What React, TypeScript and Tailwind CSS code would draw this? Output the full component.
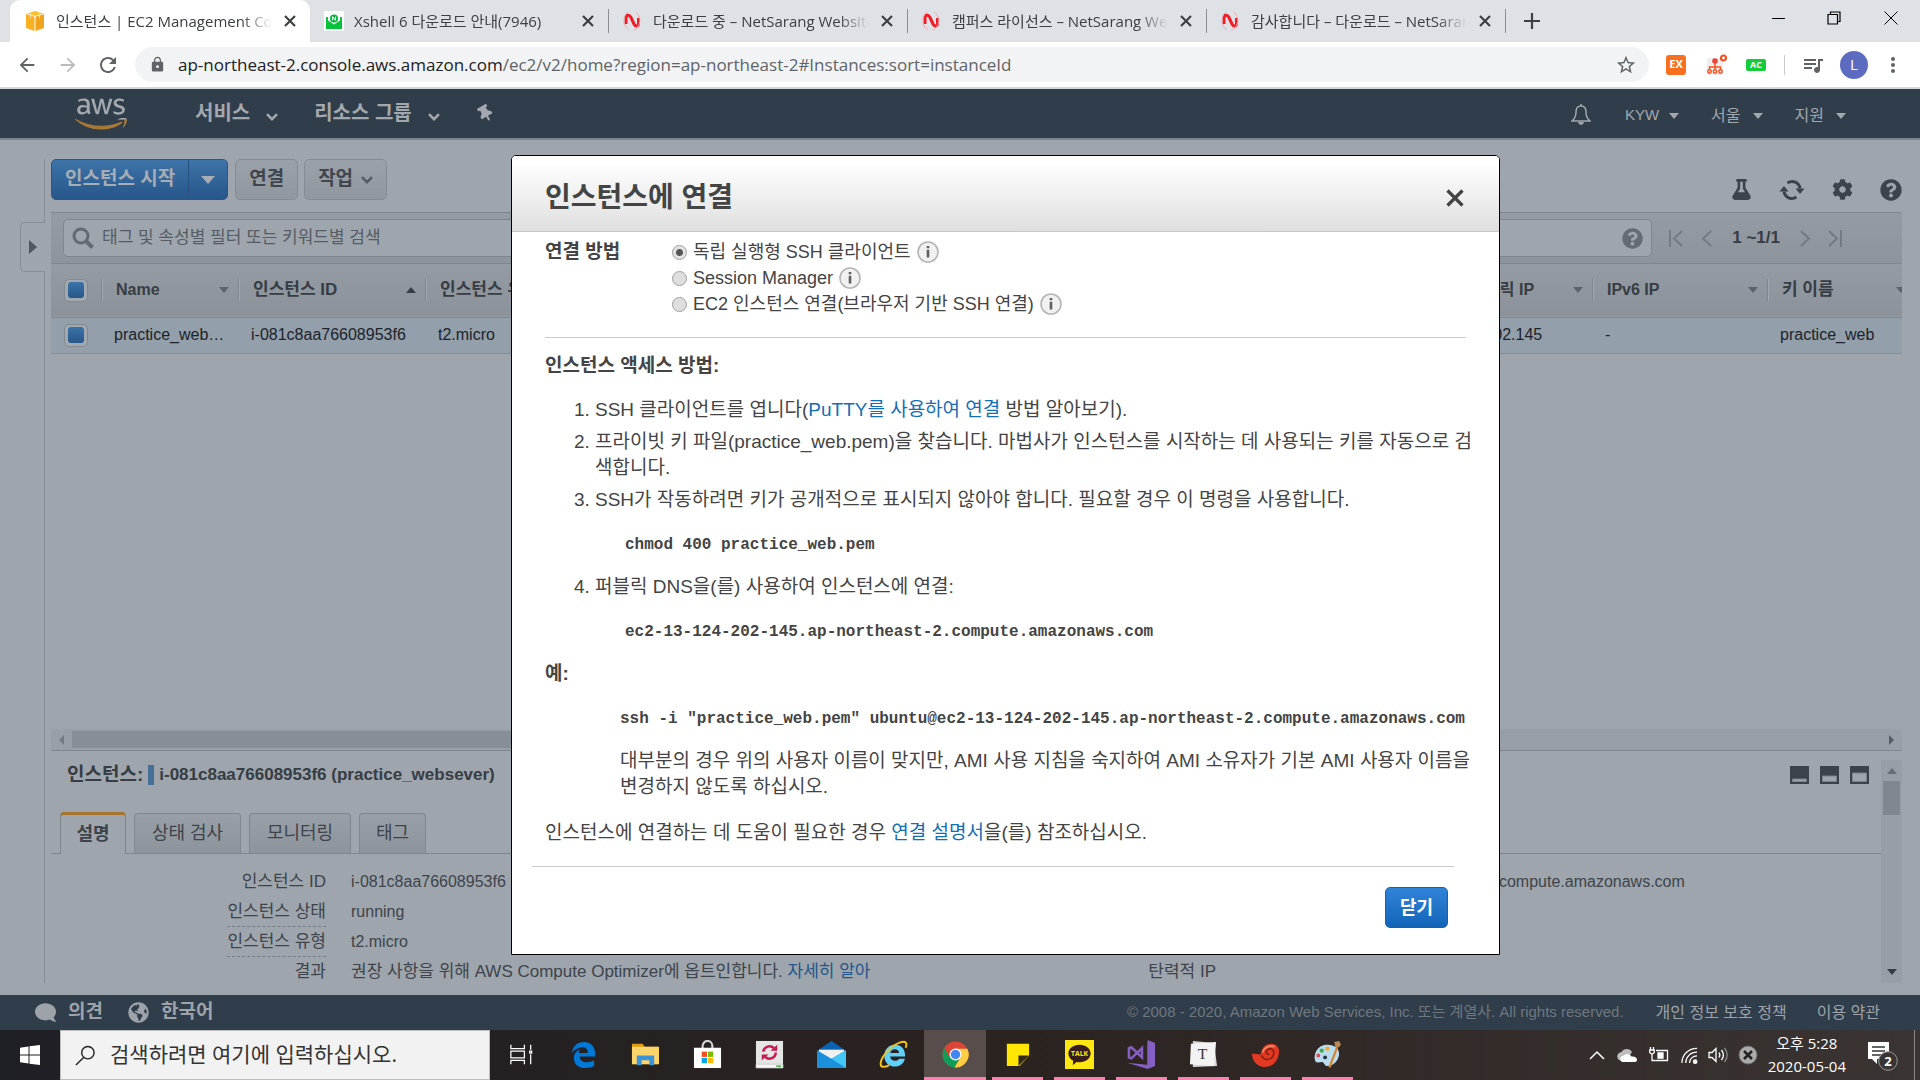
import React from "react";
import {
  FaAws,
  FaCog,
  FaComment,
  FaFlask,
  FaGlobeAmericas,
  FaQuestionCircle,
  FaThumbtack,
} from "react-icons/fa";
import {
  MdArrowBack,
  MdArrowForward,
  MdLock,
  MdMoreVert,
  MdQueueMusic,
  MdRefresh,
  MdStarBorder,
} from "react-icons/md";

/* ---------- small shapes ---------- */

function CaretDown({ className = "" }: { className?: string }) {
  return (
    <svg viewBox="0 0 10 6" className={`h-1.5 w-2.5 shrink-0 ${className}`} fill="currentColor">
      <path d="M0 0h10L5 6z" />
    </svg>
  );
}

function Chevron({ className = "" }: { className?: string }) {
  return (
    <svg viewBox="0 0 12 8" className={`h-2 w-3 shrink-0 ${className}`} fill="none" stroke="currentColor" strokeWidth="2.6">
      <path d="M1 1.2l5 5 5-5" />
    </svg>
  );
}

/* ---------- browser chrome ---------- */

function CubeIcon() {
  return (
    <svg viewBox="0 0 18 20" className="h-5 w-[18px]">
      <path d="M9 0l8 2.5L9 5 1 2.500z" fill="#fbc02d" />
      <path d="M0 3l8.500 2.800V20L0 17z" fill="#f9b021" />
      <path d="M18 3L9.500 5.800V20L18 17z" fill="#f0a31c" />
      <path d="M4.500 1.500v6M13.500 1.500v6" stroke="#ffe0a3" strokeWidth="1" fill="none" />
    </svg>
  );
}

function MailIcon() {
  return (
    <svg viewBox="0 0 20 20" className="size-5">
      <rect width="20" height="20" fill="#fff" />
      <path d="M2 6h16v12H2z" fill="#07c33c" />
      <path d="M4 5.500L10 2l6 3.500V11l-6 4.500L4 11z" fill="#fff" />
      <circle cx="10" cy="7.500" r="4" fill="#07b53c" />
      <path d="M8.600 9.300V5.700l2.800 3.600V5.700" stroke="#fff" strokeWidth="1" fill="none" />
      <path d="M2 8l8 5.500L18 8v10H2z" fill="#07c33c" />
    </svg>
  );
}

function NetSarangIcon() {
  return (
    <svg viewBox="0 0 18 20" className="h-5 w-[18px]" fill="none">
      <path d="M3 13V7c0-3.500 3.500-3.500 5-.5l3 6.500c1.500 3 4.500 2.500 4.500-.5V7" stroke="#ee1c25" strokeWidth="3" />
      <path d="M5 1C1 4 0 10 2 14.500c.8 1.700 2 3.300 3.500 4.300M12.500.8C16 4 17.500 7.500 16.500 12c-.8 3-3 6-6 7.300" stroke="#f4a3a8" strokeWidth="1" />
    </svg>
  );
}

const tabs = [
  { title: "인스턴스 | EC2 Management Console", icon: <CubeIcon />, active: true },
  { title: "Xshell 6 다운로드 안내(7946)", icon: <MailIcon />, active: false },
  { title: "다운로드 중 – NetSarang Website", icon: <NetSarangIcon />, active: false },
  { title: "캠퍼스 라이선스 – NetSarang Website", icon: <NetSarangIcon />, active: false },
  { title: "감사합니다 – 다운로드 – NetSarang", icon: <NetSarangIcon />, active: false },
];

function TabStrip() {
  return (
    <div className="flex h-[42px] shrink-0 items-stretch bg-[#dee1e6] pl-2.5 text-[#3c4043]">
      {tabs.map((t) => (
        <div
          key={t.title}
          className={
            t.active
              ? "flex w-[300px] items-center rounded-t-[10px] bg-white pr-2.5 pl-4"
              : "flex w-[299px] items-center pr-0 pl-3.5"
          }
        >
          <span className="flex w-[30px] shrink-0">{t.icon}</span>
          <span className="min-w-0 flex-1 overflow-hidden text-[15px] leading-[40px] whitespace-nowrap [mask-image:linear-gradient(to_right,#000_86%,transparent)]">
            {t.title}
          </span>
          <button aria-label="탭 닫기" className="ml-2 flex size-5 items-center justify-center">
            <svg viewBox="0 0 12 12" className="size-3" stroke="currentColor" strokeWidth="2.200"><path d="M1 1l10 10M11 1L1 11" /></svg>
          </button>
          {!t.active && <span className="ml-2.5 h-6 w-px bg-[#8a8d91]" />}
        </div>
      ))}
      <button aria-label="새 탭" className="ml-3 flex w-7 items-center justify-center">
        <svg viewBox="0 0 16 16" className="size-4" stroke="currentColor" strokeWidth="2.200"><path d="M8 0v16M0 8h16" /></svg>
      </button>
      <div className="ml-auto flex h-9 items-center text-black">
        <button aria-label="최소화" className="flex w-14 justify-center">
          <svg viewBox="0 0 13 13" className="size-[13px]" stroke="currentColor"><path d="M0 6.500h13" /></svg>
        </button>
        <button aria-label="이전 크기로" className="flex w-14 justify-center">
          <svg viewBox="0 0 14 14" className="size-3.5" fill="none" stroke="currentColor" strokeWidth="1.200">
            <path d="M1 3.500h9.500V13H1zM3.500 3.500V1H13v9.500h-2.500" />
          </svg>
        </button>
        <button aria-label="닫기" className="flex w-[58px] justify-center">
          <svg viewBox="0 0 14 14" className="size-3.5" stroke="currentColor"><path d="M.5.5l13 13M13.500.5l-13 13" /></svg>
        </button>
      </div>
    </div>
  );
}

function AddressBar() {
  return (
    <div className="flex h-[47px] shrink-0 items-center border-b-2 border-[#d5d8dc] bg-white pr-[15px] pl-4 text-[#5f6368]">
      <button aria-label="뒤로"><MdArrowBack className="size-[22px]" /></button>
      <button aria-label="앞으로" className="ml-[19px] text-[#babcbe]"><MdArrowForward className="size-[22px]" /></button>
      <button aria-label="새로고침" className="ml-[17px]"><MdRefresh className="size-6" /></button>
      <div className="ml-[15px] flex h-[35px] min-w-0 flex-1 items-center rounded-full bg-[#f1f3f4] pr-3 pl-3.5">
        <MdLock className="size-[17px] shrink-0" />
        <span className="ml-3 min-w-0 flex-1 truncate text-[17px]">
          <span className="text-[#202124]">ap-northeast-2.console.aws.amazon.com</span>
          /ec2/v2/home?region=ap-northeast-2#Instances:sort=instanceId
        </span>
        <button aria-label="북마크"><MdStarBorder className="size-[22px]" /></button>
      </div>
      <span className="ml-[17px] flex size-5 items-center justify-center rounded-[3px] bg-[#f8701f] text-[11px] font-bold text-white">EX</span>
      <svg viewBox="0 0 22 22" className="ml-5 size-[22px]" fill="none" stroke="#f4511e" strokeWidth="1.500">
        <rect x="1" y="4" width="16" height="17" rx="2" fill="#eee" stroke="none" />
        <circle cx="9" cy="7" r="2.800" fill="#ef4136" stroke="none" />
        <path d="M9 9v6M3.500 16v-3h11v3" />
        <circle cx="3.500" cy="17.500" r="1.700" />
        <circle cx="9" cy="17.500" r="1.700" />
        <circle cx="14.500" cy="17.500" r="1.700" />
        <circle cx="17.500" cy="4" r="2.500" strokeWidth="2.200" fill="#fff" />
      </svg>
      <span className="ml-[18px] flex h-3 w-5 items-center justify-center rounded-[2px] bg-[#14cc3a] text-[9px] font-bold text-white">AC</span>
      <span className="ml-[18px] h-5 w-px bg-[#c8cacd]" />
      <MdQueueMusic className="ml-4 size-6" />
      <span className="ml-[15px] flex size-7 items-center justify-center rounded-full bg-[#5c6bc0] text-[15px] text-white">L</span>
      <button aria-label="메뉴" className="ml-[13px]"><MdMoreVert className="size-6" /></button>
    </div>
  );
}

/* ---------- AWS console ---------- */

function ConsoleNav() {
  return (
    <nav className="flex h-[51px] shrink-0 items-center border-b-2 border-[#7b848d] bg-[#303d4a] pr-[74px] pl-[75px] text-[#a3a8ae]">
      <svg width="0" height="0" className="absolute">
        <linearGradient id="aws-fill" gradientUnits="userSpaceOnUse" x1="0" y1="0" x2="0" y2="512">
          <stop offset=".62" stopColor="#a3a8ae" />
          <stop offset=".62" stopColor="#a87936" />
        </linearGradient>
      </svg>
      <FaAws className="h-[50px] w-[52px]" fill="url(#aws-fill)" />
      <button className="ml-[68px] flex items-center pb-0.5 text-xl font-bold">
        서비스 <Chevron className="mt-2 ml-4" />
      </button>
      <button className="ml-[36px] flex items-center pb-0.5 text-xl font-bold">
        리소스 그룹 <Chevron className="mt-2 ml-4" />
      </button>
      <button aria-label="고정" className="ml-[37px]"><FaThumbtack className="size-[17px] -rotate-30" /></button>
      <svg viewBox="0 0 20 22" className="ml-auto h-[22px] w-5" fill="none" stroke="currentColor" strokeWidth="1.500">
        <path d="M10 1v2M10 3c-3.500 0-5 2.500-5 6 0 5-1.500 7-4 9h18c-2.500-2-4-4-4-9 0-3.500-1.500-6-5-6z" />
        <path d="M8 19a2 2 0 004 0" fill="currentColor" />
      </svg>
      <button className="ml-[34px] flex items-center pt-1 text-[15px]">KYW <CaretDown className="ml-2.5" /></button>
      <button className="ml-[32px] flex items-center pt-1 text-base">서울 <CaretDown className="ml-3" /></button>
      <button className="ml-[32px] flex items-center pt-1 text-base">지원 <CaretDown className="ml-3" /></button>
    </nav>
  );
}

function SyncIcon() {
  return (
    <svg viewBox="0 0 26 22" className="h-[22px] w-[26px]" fill="none" stroke="currentColor" strokeWidth="3">
      <path d="M8.500 4A8 8 0 0121 9.500M17.500 18A8 8 0 015 12.500" />
      <path d="M16.500 9.500h9L21 15zM.5 12.500h9L5 7z" fill="currentColor" stroke="none" />
    </svg>
  );
}

function ActionRow() {
  return (
    <div className="flex h-[41px] shrink-0 items-center text-[19px] font-bold">
      <div className="flex h-full rounded-[5px] border border-[#27578c] bg-linear-to-b from-[#3d74a9] to-[#27568a] text-[#a7adb4]">
        <button className="px-[13px]">인스턴스 시작</button>
        <button aria-label="시작 옵션" className="flex w-[39px] items-center justify-center border-l border-[#25507f]">
          <svg viewBox="0 0 14 8" className="h-2 w-3.5" fill="currentColor"><path d="M0 0h14L7 8z" /></svg>
        </button>
      </div>
      <button className="ml-[7px] h-full rounded-[5px] border border-[#858b92] bg-linear-to-b from-[#9ba1a8] to-[#91979e] px-[13px] text-[#40464d]">연결</button>
      <button className="ml-1.5 flex h-full items-center rounded-[5px] border border-[#858b92] bg-linear-to-b from-[#9ba1a8] to-[#91979e] px-[13px] text-[#40464d]">
        작업 <Chevron className="ml-2 text-[#555c63]" />
      </button>
      <div className="ml-auto flex items-center gap-[27px] pt-5 text-[#3c434a]">
        <button aria-label="실험"><FaFlask className="size-[21px]" /></button>
        <button aria-label="새로 고침"><SyncIcon /></button>
        <button aria-label="설정"><FaCog className="size-[21px]" /></button>
        <button aria-label="도움말"><FaQuestionCircle className="size-[22px]" /></button>
      </div>
    </div>
  );
}

function FilterBar() {
  const pager = "h-[17px] w-3.5 text-[#737a81]";
  return (
    <div className="flex h-[52px] shrink-0 items-center border-y border-[#7f868d] bg-linear-to-b from-[#959ba2] to-[#8e949b] pr-[60px] pl-3">
      <label className="flex h-[38px] flex-1 items-center rounded-[5px] border border-[#7f868d] bg-[#9ea5ac] pr-2 pl-2">
        <svg viewBox="0 0 22 22" className="size-[22px]" fill="none" stroke="#636a71">
          <circle cx="9" cy="9" r="7" strokeWidth="3" />
          <path d="M14 14l6.500 6.500" strokeWidth="4" />
        </svg>
        <input
          aria-label="인스턴스 필터"
          placeholder="태그 및 속성별 필터 또는 키워드별 검색"
          className="ml-2 min-w-0 flex-1 bg-transparent text-[17px] text-[#555c63] outline-none placeholder:text-[#555c63]"
        />
        <FaQuestionCircle className="size-[21px] text-[#646b72]" />
      </label>
      <div className="ml-[17px] flex items-center text-[17px] font-bold text-[#363d44]">
        <svg viewBox="0 0 14 17" className={pager} fill="none" stroke="currentColor" strokeWidth="2"><path d="M1 0v17M13 1L5 8.500l8 7.500" /></svg>
        <svg viewBox="0 0 14 17" className={`ml-4 ${pager}`} fill="none" stroke="currentColor" strokeWidth="2"><path d="M12 1L4 8.500l8 7.500" /></svg>
        <span className="ml-[19px]">1 ~1/1</span>
        <svg viewBox="0 0 14 17" className={`ml-[18px] ${pager}`} fill="none" stroke="currentColor" strokeWidth="2"><path d="M3 1l8 7.500L3 16" /></svg>
        <svg viewBox="0 0 14 17" className={`ml-4 ${pager}`} fill="none" stroke="currentColor" strokeWidth="2"><path d="M1 1l8 7.500L1 16M13 0v17" /></svg>
      </div>
    </div>
  );
}

function BlueCheckbox({ label }: { label: string }) {
  return (
    <label className="flex h-[23px] w-6 items-center justify-center rounded-[5px] border border-[#828990] bg-[#a2a8af]">
      <input type="checkbox" defaultChecked aria-label={label} className="size-4 appearance-none rounded-[3px] bg-linear-to-b from-[#3b72a8] to-[#275889]" />
    </label>
  );
}

function HeadCell({ children, sort = "down", hangul = false, last = false }: { children: React.ReactNode; sort?: "up" | "down"; hangul?: boolean; last?: boolean }) {
  return (
    <th className="overflow-hidden p-0">
      <div
        className={
          last
            ? "flex h-[22px] items-center justify-between border-l border-[#7e858c] pr-0 pl-3.5 shadow-[inset_1px_0_0_#a2a8ae]"
            : "flex h-[22px] items-center justify-between border-l border-[#7e858c] pr-[9px] pl-3.5 shadow-[inset_1px_0_0_#a2a8ae]"
        }
      >
        <span className={hangul ? "text-[17px] leading-[22px] whitespace-nowrap" : "leading-[22px] whitespace-nowrap"}>{children}</span>
        <CaretDown className={sort === "up" ? "rotate-180 text-[#363d44]" : last ? "-mr-1 text-[#5c636a]" : "text-[#5c636a]"} />
      </div>
    </th>
  );
}

function InstanceTable() {
  return (
    <table className="w-full shrink-0 table-fixed border-collapse text-left text-base">
      <colgroup>
        <col className="w-[50px]" />
        <col className="w-[137px]" />
        <col className="w-[187px]" />
        <col className="w-[187px]" />
        <col />
        <col className="w-[174px]" />
        <col className="w-[175px]" />
        <col className="w-[135px]" />
      </colgroup>
      <thead>
        <tr className="h-[53px] border-b border-[#7f868d] bg-linear-to-b from-[#959ba2] to-[#8c9299] text-[#363d44]">
          <th className="pl-[13px]"><BlueCheckbox label="모두 선택" /></th>
          <HeadCell>Name</HeadCell>
          <HeadCell sort="up" hangul>인스턴스 ID</HeadCell>
          <HeadCell hangul>인스턴스 유형</HeadCell>
          <th />
          <HeadCell>IPv4 퍼블릭 IP</HeadCell>
          <HeadCell>IPv6 IP</HeadCell>
          <HeadCell hangul last>키 이름</HeadCell>
        </tr>
      </thead>
      <tbody>
        <tr className="h-9 border-b border-[#858e97] bg-[#939fab] text-[#1d232a]">
          <td className="pl-[13px]"><BlueCheckbox label="practice_websever" /></td>
          <td className="truncate pr-3 pl-[13px]">practice_websever</td>
          <td className="pl-[13px]">i-081c8aa76608953f6</td>
          <td className="pl-[13px]">t2.micro</td>
          <td />
          <td className="pl-[13px]">13.124.202.145</td>
          <td className="pl-[13px]">-</td>
          <td className="pl-[13px]">practice_web</td>
        </tr>
      </tbody>
    </table>
  );
}

const detailRows = [
  { label: "인스턴스 ID", value: "i-081c8aa76608953f6", hint: false, label2: "퍼블릭 DNS(IPv4)", value2: "ec2-13-124-202-145.ap-northeast-2.compute.amazonaws.com" },
  { label: "인스턴스 상태", value: "running", hint: true, label2: "", value2: "" },
  { label: "인스턴스 유형", value: "t2.micro", hint: true, label2: "", value2: "" },
  { label: "결과", value: "권장 사항을 위해 AWS Compute Optimizer에 옵트인합니다. ", link: "자세히 알아", hint: false, label2: "탄력적 IP", value2: "" },
];

function PaneIcon({ y }: { y: number }) {
  return (
    <svg viewBox="0 0 19 18" className="h-[18px] w-[19px]">
      <path d="M0 0h19v18H0z" fill="#3b424a" />
      <path d={`M2.500 ${y}h14V15.500h-14z`} fill="#9ea5ac" stroke="#7b8289" />
    </svg>
  );
}

function DetailPane() {
  return (
    <div className="flex h-[232px] shrink-0 text-base text-[#3d444b]">
      <div className="min-w-0 flex-1">
        <div className="flex h-[48px] items-center pr-3 pl-4 text-[17px] font-bold text-[#363d44]">
          <span className="text-[19px]">인스턴스:</span>
          <span className="mx-[5px] h-5 w-1.5 bg-[#466f98]" />
          i-081c8aa76608953f6 (practice_websever)
          <span className="ml-auto flex gap-[11px]">
            <PaneIcon y={13} />
            <PaneIcon y={10} />
            <PaneIcon y={7} />
          </span>
        </div>
        <div role="tablist" className="mt-[13px] flex h-[42px] items-end gap-2 border-b border-[#7f868d] pl-[9px] text-[18px]">
          <button role="tab" aria-selected="true" className="-mb-px h-[42px] w-[66px] rounded-t-[4px] border border-t-[3px] border-b-0 border-[#7f868d] border-t-[#a5752c] bg-[#9ea5ac] font-bold">설명</button>
          <button role="tab" aria-selected="false" className="h-10 w-[107px] rounded-t-[4px] border border-b-0 border-[#7f868d] bg-linear-to-b from-[#999fa6] to-[#8e949b]">상태 검사</button>
          <button role="tab" aria-selected="false" className="h-10 w-[102px] rounded-t-[4px] border border-b-0 border-[#7f868d] bg-linear-to-b from-[#999fa6] to-[#8e949b]">모니터링</button>
          <button role="tab" aria-selected="false" className="h-10 w-[67px] rounded-t-[4px] border border-b-0 border-[#7f868d] bg-linear-to-b from-[#999fa6] to-[#8e949b]">태그</button>
        </div>
        <dl className="mt-[13px] grid grid-cols-[275px_615px_275px_1fr] leading-[30px] whitespace-nowrap">
          {detailRows.map((r) => (
            <React.Fragment key={r.label}>
              <dt className="text-right text-[17px] leading-[30px]">
                <span className={r.hint ? "inline-block border-b border-dashed border-[#757c83] leading-[28px]" : ""}>{r.label}</span>
              </dt>
              <dd className={r.link ? "pl-[25px] text-[17px] leading-[30px]" : "pl-[25px]"}>
                {r.value}
                {r.link && <a href="#optimizer" className="text-[#22568d]">{r.link}</a>}
              </dd>
              <dt className="text-right text-[17px] leading-[30px]">{r.label2}</dt>
              <dd className="pl-[25px]">{r.value2}</dd>
            </React.Fragment>
          ))}
        </dl>
      </div>
      <div className="mt-[9px] flex w-[21px] shrink-0 flex-col items-center bg-[#979ea5] py-2">
        <CaretDown className="rotate-180 text-[#676e75]" />
        <span className="mt-[7px] h-[34px] w-[17px] bg-[#80878f]" />
        <CaretDown className="mt-auto text-[#363d44]" />
      </div>
    </div>
  );
}

/* ---------- connect dialog ---------- */

function InfoIcon() {
  return (
    <svg viewBox="0 0 22 22" className="size-[22px] shrink-0">
      <circle cx="11" cy="11" r="10" fill="#f1f1f1" stroke="#b5b5b5" strokeWidth="1.600" />
      <path d="M9.700 5h2.600v2.200H9.700zM9.700 8.800h2.600v7.700H9.700z" fill="#5f5f5f" />
    </svg>
  );
}

function MethodOption({ label, checked = false }: { label: string; checked?: boolean }) {
  return (
    <div className="flex h-[26px] items-center">
      <label className="flex items-center gap-1.5 pr-1.5 text-[18px]">
        <input
          type="radio"
          name="method"
          defaultChecked={checked}
          className="size-[15px] appearance-none rounded-full border border-[#a0a0a0] bg-[#dedede] checked:bg-[radial-gradient(circle,#555_0_3px,#e4e4e4_4px)]"
        />
        {label}
      </label>
      <InfoIcon />
    </div>
  );
}

function ConnectDialog() {
  return (
    <div className="absolute inset-x-0 top-[15px] flex justify-center pl-[91px]">
      <section role="dialog" aria-labelledby="connect-title" className="w-[989px] rounded-t-[5px] border border-black bg-white text-[19px] leading-[26px] text-[#444]">
        <header className="flex h-[76px] items-center justify-between rounded-t-[4px] border-b border-[#c8c8c8] bg-linear-to-b from-white from-10% to-[#dfdfdf] pt-2 pr-[35px] pl-[33px]">
          <h2 id="connect-title" className="text-[28px] font-bold">인스턴스에 연결</h2>
          <button aria-label="닫기">
            <svg viewBox="0 0 18 18" className="size-[18px]" stroke="#444" strokeWidth="3.200"><path d="M1.500 1.500l15 15M16.500 1.500l-15 15" /></svg>
          </button>
        </header>
        <div className="px-[33px] pt-[7px]">
          <fieldset className="flex border-b border-[#ccc] pb-5">
            <legend className="float-left w-[127px] font-bold">연결 방법</legend>
            <div>
              <MethodOption label="독립 실행형 SSH 클라이언트" checked />
              <MethodOption label="Session Manager" />
              <MethodOption label="EC2 인스턴스 연결(브라우저 기반 SSH 연결)" />
            </div>
          </fieldset>
          <h3 className="mt-[15px] font-bold">인스턴스 액세스 방법:</h3>
          <ol className="mt-[18px] -mr-2 list-decimal space-y-1.5 pl-[50px]">
            <li>
              SSH 클라이언트를 엽니다(<a href="#putty" className="text-[#146eb4]">PuTTY를 사용하여 연결</a> 방법 알아보기).
            </li>
            <li>프라이빗 키 파일(practice_web.pem)을 찾습니다. 마법사가 인스턴스를 시작하는 데 사용되는 키를 자동으로 검색합니다.</li>
            <li>
              SSH가 작동하려면 키가 공개적으로 표시되지 않아야 합니다. 필요할 경우 이 명령을 사용합니다.
              <pre className="mt-[19px] mb-4 pl-[30px] font-['Liberation_Mono',monospace] text-base leading-[26px] font-bold">chmod 400 practice_web.pem</pre>
            </li>
            <li>
              퍼블릭 DNS을(를) 사용하여 인스턴스에 연결:
              <pre className="mt-[19px] mb-4 pl-[30px] font-['Liberation_Mono',monospace] text-base leading-[26px] font-bold">ec2-13-124-202-145.ap-northeast-2.compute.amazonaws.com</pre>
            </li>
          </ol>
          <h3 className="font-bold">예:</h3>
          <div className="-mr-2 pl-[75px]">
            <pre className="mt-[19px] mb-4 font-['Liberation_Mono',monospace] text-base leading-[26px] font-bold">ssh -i "practice_web.pem" ubuntu@ec2-13-124-202-145.ap-northeast-2.compute.amazonaws.com</pre>
            <p>대부분의 경우 위의 사용자 이름이 맞지만, AMI 사용 지침을 숙지하여 AMI 소유자가 기본 AMI 사용자 이름을 변경하지 않도록 하십시오.</p>
          </div>
          <p className="mt-5">
            인스턴스에 연결하는 데 도움이 필요한 경우 <a href="#docs" className="text-[#146eb4]">연결 설명서</a>을(를) 참조하십시오.
          </p>
        </div>
        <footer className="mt-5 mr-[45px] ml-5 flex justify-end border-t border-[#ccc] pt-5 pr-1.5 pb-[26px]">
          <button className="h-[41px] w-[63px] rounded-[5px] border border-[#1c5fa9] bg-linear-to-b from-[#2f83d8] to-[#1165b8] text-[18px] font-bold text-white">닫기</button>
        </footer>
      </section>
    </div>
  );
}

function ConsoleFooter() {
  return (
    <footer className="flex h-[35px] shrink-0 items-center bg-[#303d4a] pr-10 pl-[35px] text-base text-[#9da3a9]">
      <button className="flex items-center gap-3 text-[19px] font-bold"><FaComment className="size-[21px] -scale-x-100" />의견</button>
      <button className="ml-[25px] flex items-center gap-3 text-[19px] font-bold"><FaGlobeAmericas className="size-[21px]" />한국어</button>
      <span className="ml-auto text-[15px] text-[#6f7780]">© 2008 - 2020, Amazon Web Services, Inc. 또는 계열사. All rights reserved.</span>
      <a href="#privacy" className="ml-8">개인 정보 보호 정책</a>
      <a href="#terms" className="ml-[30px]">이용 약관</a>
    </footer>
  );
}

/* ---------- Windows taskbar ---------- */

const taskIcons: { name: string; open?: boolean; active?: boolean; art: React.ReactNode }[] = [
  {
    name: "작업 보기",
    art: <path d="M4 5v4h14V5M4 25v-4h14v4M4 11.500h14v7H4zM24.500 5v5M24.500 15v10M23.500 11.500h2v2h-2z" fill="none" stroke="#fff" strokeWidth="1.300" />,
  },
  {
    name: "Edge",
    art: <path d="M3 13.500C4 6 9 2 15.500 2 23 2 27 7.500 27 13.500V17H11c.3 4 3.500 6 7.500 6 3 0 5.500-.8 7.500-2v6c-2.500 1.200-5.500 2-9 2-7 0-12-4-12-10.500C5 14.500 7.500 11 11.500 9.500c-1 1.200-1.400 2.500-1.500 4h9.500c0-4-2-6-5.500-6-4.500 0-8.500 2.500-11 6z" fill="#0078d7" />,
  },
  {
    name: "파일 탐색기",
    art: (
      <>
        <path d="M1 4h11l2 3h14v18H1z" fill="#e09b0e" />
        <path d="M1 7h28v18H1z" fill="#fcd46c" />
        <path d="M6 16h18v10h-5v-5h-8v5H6z" fill="#3b93db" />
      </>
    ),
  },
  {
    name: "스토어",
    art: (
      <>
        <path d="M10 9V6a5 5 0 0110 0v3" fill="none" stroke="#d6d6d6" strokeWidth="2.200" />
        <path d="M1 8h28v21H1z" fill="#fff" />
        <path d="M9 12h5.500v5.500H9z" fill="#f25022" />
        <path d="M15.500 12H21v5.500h-5.500z" fill="#7fba00" />
        <path d="M9 18.500h5.500V24H9z" fill="#00a4ef" />
        <path d="M15.500 18.500H21V24h-5.500z" fill="#ffb900" />
      </>
    ),
  },
  {
    name: "동기화",
    art: (
      <>
        <path d="M1 1h28v28H1z" fill="#e4e6e6" />
        <path d="M1 25h28v4H1z" fill="#f6f6f6" stroke="#b6b8b8" strokeWidth=".6" />
        <path d="M22 26.300h5v1.500h-5z" fill="#39a935" />
        <path d="M8.500 12a6.500 6.500 0 0111-3.500M21.500 13a6.500 6.500 0 01-11 4.500" fill="none" stroke="#c8184f" strokeWidth="2.600" />
        <path d="M16 11h7V5zM14 15H7v6z" fill="#c8184f" />
      </>
    ),
  },
  {
    name: "메일",
    art: (
      <>
        <path d="M0 11L15 1l15 10z" fill="#0a63b3" />
        <path d="M2 10h26v12H2z" fill="#f1f1f1" />
        <path d="M0 10.500l15 9 15-9V29H0z" fill="#1d90dd" />
        <path d="M30 10.500V29L15 19.500z" fill="#43c8f5" />
      </>
    ),
  },
  {
    name: "Internet Explorer",
    art: (
      <>
        <path d="M27 17H11.500c.4 3 2.500 4.500 5 4.500 2 0 3.500-.8 4.300-2.200h6C25.500 24 22 27.500 16.500 27.500 10 27.500 5.500 23 5.500 16.500S10 5 16.500 5C23.500 5 27.300 10 27 17zM11.600 13.500h9.300c-.3-2.400-2-4-4.500-4s-4.300 1.600-4.800 4z" fill="#5fd0f7" />
        <path d="M27.500 8C29.500 3.500 28 .5 22 2.500 13 5.500 3 16 1.800 23.500 1 29 6 28.500 10.500 26" fill="none" stroke="#f4c21b" strokeWidth="2" />
      </>
    ),
  },
  {
    name: "Chrome",
    open: true,
    active: true,
    art: (
      <>
        <circle cx="15" cy="15" r="13.500" fill="#db4437" />
        <path d="M3.300 8.300A13.500 13.500 0 0014 28.500l6-10.500-5-3-6 3z" fill="#0f9d58" />
        <path d="M14 28.500A13.500 13.500 0 0027.200 9H15l5.500 8.500z" fill="#ffcd40" />
        <circle cx="15" cy="15" r="6.200" fill="#fff" />
        <circle cx="15" cy="15" r="4.900" fill="#4285f4" />
      </>
    ),
  },
  {
    name: "스티커 메모",
    open: true,
    art: (
      <>
        <path d="M4 4h23v12L17 27H4z" fill="#ffe600" />
        <path d="M16 16h11L16 27z" fill="#33291f" />
      </>
    ),
  },
  {
    name: "카카오톡",
    open: true,
    art: (
      <>
        <path d="M0 0h30v30H0z" fill="#ffe812" />
        <path d="M15 5c6.500 0 11.500 4 11.500 9S21.500 23 15 23c-1 0-2-.1-3-.3L8 26l.5-4.500C5.500 20 3.500 17.200 3.500 14 3.500 9 8.500 5 15 5z" fill="#371d1e" />
        <text x="15" y="17" textAnchor="middle" fontSize="7" fontWeight="bold" fill="#ffe812">TALK</text>
      </>
    ),
  },
  {
    name: "Visual Studio",
    open: true,
    art: (
      <>
        <path d="M21.500 0L29 3v24l-7.500 3L0 23.500l21 2V3z" fill="#865fc5" />
        <path d="M2 8.500l2.500-1L15.500 18V8.500L4.500 19 2 18z" fill="none" stroke="#865fc5" strokeWidth="2.600" />
      </>
    ),
  },
  {
    name: "Typora",
    open: true,
    art: (
      <>
        <path d="M4 1l22 2 3 24-25 1z" fill="#d8d8d8" />
        <path d="M2 4l26-2-2 25-25-2z" fill="#f3f3f3" />
        <text x="14" y="20" textAnchor="middle" fontSize="16" fontFamily="Liberation Serif" fill="#333">T</text>
      </>
    ),
  },
  {
    name: "Xshell",
    open: true,
    art: (
      <>
        <path d="M1 14l9 1c1-7 5-11 11-11 5 0 8 3.500 8 7.500C29 21 23 28 14 28 7 28 1 22 1 14z" fill="#e23a22" />
        <path d="M11 16c1 4 5 5 8.500 3.500 3.500-1.700 5-5.500 3.500-8.500-1.500-2.700-6-2.500-7 .5-.7 2.300 1.300 4 3 3" fill="none" stroke="#7e1d10" strokeWidth="1.500" />
        <path d="M12 13c2-6 8-8 12.500-6" fill="none" stroke="#f58a6e" strokeWidth="1.800" />
      </>
    ),
  },
  {
    name: "그림판",
    open: true,
    art: (
      <>
        <path d="M13 5c8-1 14 3 14 9s-5 13-12 13c-3 0-3-3-5-4s-7 2-8-2C.5 14 5 6 13 5z" fill="#b9dcee" />
        <circle cx="5.500" cy="16" r="2" fill="#e44" />
        <circle cx="9" cy="11" r="2.200" fill="#4a4" />
        <circle cx="15" cy="9" r="2.200" fill="#f5a623" />
        <circle cx="12.500" cy="18" r="2" fill="#26323c" />
        <path d="M24 7l2 1-8 21-2-1z" fill="#d9822b" />
        <path d="M22 2l5-1 2 4-3 3-3-1z" fill="#b98a55" />
      </>
    ),
  },
];

function Taskbar() {
  return (
    <div className="flex h-[50px] shrink-0 items-stretch bg-linear-to-r from-[#1f1f26] via-[#2a221f] to-[#3a3432] text-white">
      <button aria-label="시작" className="flex w-[60px] items-center justify-center">
        <svg viewBox="0 0 20 20" className="size-5" fill="#fff">
          <path d="M0 2.800l8.500-1.300v8H0zM9.500 1.300L20 0v9.500H9.500zM0 10.500h8.500v8L0 17.200zM9.500 10.500H20V20L9.500 18.700z" />
        </svg>
      </button>
      <label className="flex w-[430px] items-center border border-[#bdbdbd] bg-[#f2f2f2] pl-3.5">
        <svg viewBox="0 0 22 22" className="size-[21px]" fill="none" stroke="#222" strokeWidth="1.500">
          <circle cx="13.500" cy="8" r="6.500" />
          <path d="M9 13l-8 8" />
        </svg>
        <input aria-label="검색" placeholder="검색하려면 여기에 입력하십시오." className="ml-3.5 min-w-0 flex-1 bg-transparent text-[21px] outline-none placeholder:text-[#333]" />
      </label>
      <div className="flex">
        {taskIcons.map((t) => (
          <button key={t.name} aria-label={t.name} className={t.active ? "flex w-[62px] flex-col items-center bg-[#574d4a]" : "flex w-[62px] flex-col items-center"}>
            <svg viewBox="0 0 30 30" className="mt-2.5 size-[29px] shrink-0">{t.art}</svg>
            {t.open && <span className={t.active ? "mt-auto h-[3px] w-full bg-[#ff7fb0]" : "mt-auto h-[3px] w-[51px] bg-[#ff7fb0]"} />}
          </button>
        ))}
      </div>
      <div className="ml-auto flex items-center">
        <svg viewBox="0 0 16 10" className="h-2.5 w-4" fill="none" stroke="#fff" strokeWidth="1.500"><path d="M1 9l7-7 7 7" /></svg>
        <svg viewBox="0 0 20 14" className="ml-3 h-3.5 w-5">
          <path d="M5 13a4.500 4.500 0 01-.5-9A6 6 0 0115 4l-6 9z" fill="#bdbdbd" />
          <path d="M5 14a3.500 3.500 0 010-6c2 0 3-2 5-2s3.500 1 4.500 2.500C18 8 20 10 20 11.500A2.500 2.500 0 0117.500 14z" fill="#fff" />
        </svg>
        <svg viewBox="0 0 20 16" className="ml-3 h-4 w-5" fill="none" stroke="#fff" strokeWidth="1.300">
          <path d="M7 3.500h11.500v10h-12" />
          <path d="M9 6h5v5H9z" fill="#fff" />
          <path d="M1.500 0v3M4.500 0v3M.7 3h4.600v2.500L3 7.500.7 5.500zM3 7v6.500h3.500" />
        </svg>
        <svg viewBox="0 0 18 18" className="ml-3 size-[17px]" fill="none" stroke="#fff" strokeWidth="1.300">
          <path d="M1 17C1 8 8 1.500 17 1.500M5 17C5 10.500 10 5.500 17 5.500M9 17c0-4.500 3.500-7.500 8-7.500" />
          <circle cx="15" cy="15.500" r="1.800" fill="#fff" />
        </svg>
        <svg viewBox="0 0 20 18" className="ml-2.5 h-[18px] w-5" fill="none" stroke="#fff" strokeWidth="1.300">
          <path d="M1 6.500h3l4-4v13l-4-4H1zM11 6.500c1 1.500 1 3.500 0 5M13.500 4c2.300 3 2.300 7 0 10" />
          <path d="M16.500 2c3.500 4.500 3.500 9.500 0 14" stroke="#888" />
        </svg>
        <svg viewBox="0 0 20 20" className="ml-2.5 size-5">
          <circle cx="10" cy="10" r="9" fill="#ababab" stroke="#6d6d6d" />
          <path d="M6 6l8 8M14 6l-8 8" stroke="#222" strokeWidth="2.500" />
        </svg>
        <div className="ml-2.5 text-center text-[15px] leading-[23px]">
          <div>오후 5:28</div>
          <div>2020-05-04</div>
        </div>
        <svg viewBox="0 0 32 32" className="ml-5 size-8">
          <path d="M2 3h21v17H11v5l-5-5H2z" fill="#fff" />
          <path d="M6 8h13M6 12h13M6 16h9" stroke="#333" strokeWidth="1.300" />
          <circle cx="22" cy="22" r="9.300" fill="#3a3433" stroke="#999" />
          <text x="22" y="27" textAnchor="middle" fontSize="13" fontWeight="bold" fill="#fff">2</text>
        </svg>
        <span className="ml-4 h-full w-px bg-[#8a8786]" />
        <span className="w-[5px]" />
      </div>
    </div>
  );
}

export default function App() {
  return (
    <div className="flex min-h-screen flex-col overflow-hidden bg-[#9ea5ac] font-['Open_Sans','Noto_Sans_CJK_KR',sans-serif]">
      <TabStrip />
      <AddressBar />
      <div className="flex flex-1 flex-col font-['Liberation_Sans','Noto_Sans_CJK_KR',sans-serif]">
        <ConsoleNav />
        <main className="relative flex flex-1 pr-[18px] pb-3">
          <aside className="flex w-[51px] shrink-0 pt-[19px]">
            <div className="mr-1.5 flex w-full flex-col items-end border-r border-[#868d94]">
              <button aria-label="메뉴 열기" className="-mr-px mt-[63px] flex h-[50px] w-[25px] items-center justify-center rounded-l-[5px] border border-r-0 border-[#868d94] bg-[#9ea5ac]">
                <svg viewBox="0 0 8 14" className="h-3.5 w-2" fill="#50575e"><path d="M0 0v14l8-7z" /></svg>
              </button>
            </div>
          </aside>
          <div className="flex min-w-0 flex-1 flex-col pt-[19px]">
            <ActionRow />
            <div className="h-3 shrink-0" />
            <FilterBar />
            <InstanceTable />
            <div className="min-h-20 flex-1" />
            <div className="flex h-[22px] shrink-0 items-center border-b border-[#7f868d] bg-[#999fa6] pr-2 pl-2">
              <svg viewBox="0 0 5 10" className="h-2.5 w-[5px]" fill="#737a81"><path d="M5 0v10L0 5z" /></svg>
              <span className="ml-2 h-[17px] w-3/5 bg-[#878e95]" />
              <svg viewBox="0 0 5 10" className="ml-auto h-2.5 w-[5px]" fill="#555c63"><path d="M0 0v10l5-5z" /></svg>
            </div>
            <DetailPane />
          </div>
          <ConnectDialog />
        </main>
        <ConsoleFooter />
      </div>
      <Taskbar />
    </div>
  );
}
